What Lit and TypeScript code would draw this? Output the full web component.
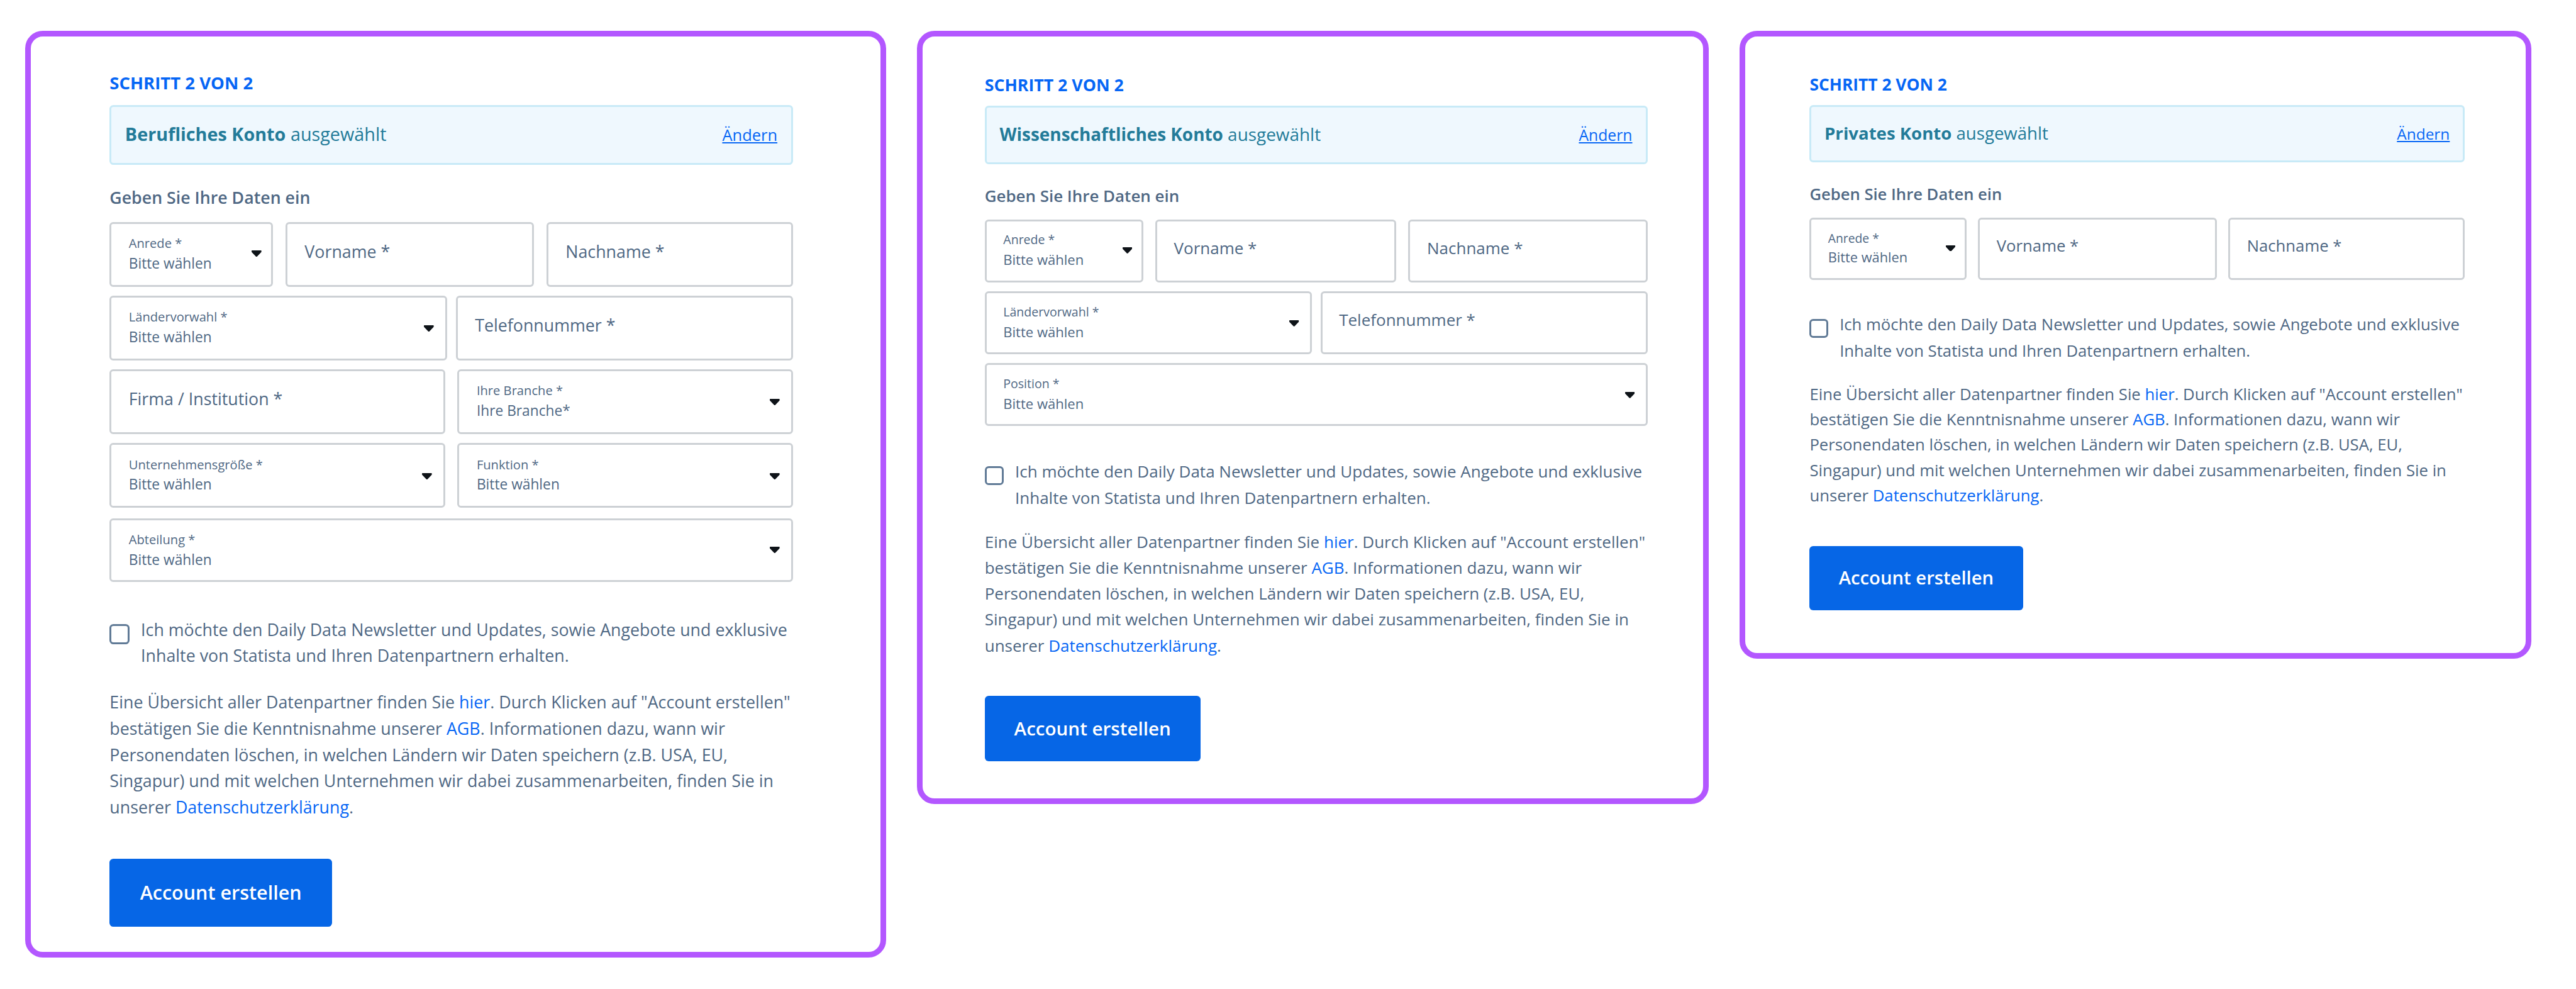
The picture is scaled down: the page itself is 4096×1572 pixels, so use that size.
import { LitElement, html, css, nothing } from 'lit';
import { customElement, property } from 'lit/decorators.js';

interface Field {
  label: string;
  value?: string;
  kind: 'select' | 'input';
}

interface Row {
  layout: string;
  fields: Field[];
}

interface Account {
  id: string;
  name: string;
  rows: Row[];
}

const select = (label: string, value = 'Bitte wählen'): Field => ({ label, value, kind: 'select' });
const input = (label: string): Field => ({ label, kind: 'input' });

const nameRow: Row = { layout: 'name', fields: [select('Anrede *'), input('Vorname *'), input('Nachname *')] };
const phoneRow: Row = { layout: 'phone', fields: [select('Ländervorwahl *'), input('Telefonnummer *')] };

const accounts: Account[] = [
  {
    id: 'business',
    name: 'Berufliches Konto',
    rows: [
      nameRow,
      phoneRow,
      { layout: 'half', fields: [input('Firma / Institution *'), select('Ihre Branche *', 'Ihre Branche*')] },
      { layout: 'half', fields: [select('Unternehmensgröße *'), select('Funktion *')] },
      { layout: 'full', fields: [select('Abteilung *')] },
    ],
  },
  {
    id: 'academic',
    name: 'Wissenschaftliches Konto',
    rows: [nameRow, phoneRow, { layout: 'full', fields: [select('Position *')] }],
  },
  { id: 'private', name: 'Privates Konto', rows: [nameRow] },
];

@customElement('form-field')
export class FormField extends LitElement {
  @property({ attribute: false }) field!: Field;

  static styles = css`
    :host {
      display: block;
      min-width: 0;
    }

    .field {
      box-sizing: border-box;
      display: flex;
      justify-content: space-between;
      height: 100%;
      border: 3px solid #cdd1d5;
      border-radius: calc(7.5 * var(--u));
      background: #fff;
      color: #4f6884;
      white-space: nowrap;
      padding-left: calc(35 * var(--u));
    }

    .placeholder {
      font-size: calc(34.2 * var(--u));
      line-height: calc(46 * var(--u));
      padding-top: calc(33 * var(--u));
    }

    .label {
      font-size: calc(25.7 * var(--u));
      line-height: calc(36 * var(--u));
      padding-top: calc(20.5 * var(--u));
    }

    .value {
      font-size: calc(29 * var(--u));
      line-height: calc(40 * var(--u));
      padding-top: calc(3.4 * var(--u));
    }

    .arrow {
      display: block;
      width: calc(20 * var(--u));
      height: calc(13 * var(--u));
      margin-top: calc(var(--arrow-top) * var(--u));
      margin-right: calc(var(--arrow-right, 22.8) * var(--u));
      fill: #0e1318;
    }
  `;

  render() {
    const { label, value, kind } = this.field;
    return html`
      <div class="field">
        ${kind === 'input'
          ? html`<div class="placeholder">${label}</div>`
          : html`
            <div>
              <div class="label">${label}</div>
              <div class="value">${value}</div>
            </div>
          `}
        ${kind === 'select'
          ? html`<svg class="arrow" viewBox="0 0 20 13"><path d="M1 0H19Q20 0 20 1V2.5Q20 3.2 19.4 3.8L11.5 12.2Q10 13.6 8.5 12.2L.6 3.8Q0 3.2 0 2.5V1Q0 0 1 0Z"/></svg>`
          : nothing}
      </div>
    `;
  }
}

@customElement('account-form')
export class AccountForm extends LitElement {
  @property({ attribute: false }) account!: Account;

  static styles = css`
    :host {
      display: block;
      color: #4f6884;
    }

    .step {
      color: #0666f5;
      font-size: calc(35.1 * var(--u));
      font-weight: 700;
      line-height: calc(46 * var(--u));
      margin-bottom: var(--step-gap);
    }

    .notice {
      box-sizing: border-box;
      height: calc(121.5 * var(--u));
      border: 3px solid #c8eaf7;
      border-radius: calc(8 * var(--u));
      background: #eff8fe;
      color: #237b99;
      display: flex;
      justify-content: space-between;
      align-items: baseline;
      padding: calc(30.2 * var(--u)) calc(28 * var(--u)) 0 calc(27.5 * var(--u));
      font-size: calc(36.7 * var(--u));
      line-height: calc(50 * var(--u));
    }

    .change {
      font-size: calc(32.5 * var(--u));
      color: #0666f5;
      text-decoration: underline;
      text-decoration-thickness: 2px;
      text-underline-offset: calc(3 * var(--u));
    }

    .title {
      font-size: calc(34.1 * var(--u));
      font-weight: 600;
      line-height: calc(46 * var(--u));
      margin-top: var(--title-gap);
      margin-bottom: calc(26.4 * var(--u));
    }

    .row {
      display: grid;
      height: calc(131 * var(--u));
      margin-bottom: calc(var(--row-gap) * var(--u));
    }

    .row.name {
      grid-template-columns: 331.5fr 504fr 500fr;
      column-gap: calc(25 * var(--u));
      --arrow-top: 53.8;
      --arrow-right: 19.4;
    }

    .row.phone {
      grid-template-columns: 1fr 1fr;
      column-gap: calc(18 * var(--u));
      --arrow-top: 56.5;
    }

    .row.half {
      grid-template-columns: 1fr 1fr;
      column-gap: calc(25 * var(--u));
      --arrow-top: 56.4;
    }

    .row.full {
      height: calc(var(--full-height) * var(--u));
      margin-top: calc(var(--full-gap) * var(--u));
      --arrow-top: var(--full-arrow);
    }

    .consent {
      display: flex;
      margin-top: var(--consent-gap);
      font-size: calc(34.2 * var(--u));
      line-height: var(--consent-line);
      white-space: nowrap;
    }

    .checkbox {
      box-sizing: border-box;
      flex: none;
      width: calc(40 * var(--u));
      height: calc(40 * var(--u));
      margin-top: calc(15.5 * var(--u));
      margin-right: calc(23.5 * var(--u));
      border: 3px solid #607a96;
      border-radius: calc(8 * var(--u));
    }

    .legal {
      margin: var(--legal-gap) 0 0;
      font-size: calc(34.2 * var(--u));
      line-height: var(--legal-line);
      white-space: nowrap;
    }

    .link {
      color: #0666f5;
      text-decoration: none;
    }

    .submit {
      box-sizing: border-box;
      display: block;
      width: calc(451 * var(--u));
      height: calc(var(--submit-height) * var(--u));
      margin-top: var(--submit-gap);
      padding: 0 0 calc(2 * var(--u));
      border: none;
      border-radius: calc(8 * var(--u));
      background: #0666e6;
      color: #fff;
      font-family: inherit;
      font-size: calc(38.9 * var(--u));
      font-weight: 600;
      text-align: center;
    }
  `;

  render() {
    return html`
      <div class="step">SCHRITT 2 VON 2</div>
      <div class="notice">
        <span><strong>${this.account.name}</strong> ausgewählt</span>
        <a class="change">Ändern</a>
      </div>
      <div class="title">Geben Sie Ihre Daten ein</div>
      ${this.account.rows.map(row => html`
        <div class="row ${row.layout}">
          ${row.fields.map(field => html`<form-field .field=${field}></form-field>`)}
        </div>
      `)}
      <div class="consent">
        <span class="checkbox"></span>
        <span>
          Ich möchte den Daily Data Newsletter und Updates, sowie Angebote und exklusive<br>
          Inhalte von Statista und Ihren Datenpartnern erhalten.
        </span>
      </div>
      <p class="legal">
        Eine Übersicht aller Datenpartner finden Sie <a class="link">hier</a>. Durch Klicken auf "Account erstellen"<br>
        bestätigen Sie die Kenntnisnahme unserer <a class="link">AGB</a>. Informationen dazu, wann wir<br>
        Personendaten löschen, in welchen Ländern wir Daten speichern (z.B. USA, EU,<br>
        Singapur) und mit welchen Unternehmen wir dabei zusammenarbeiten, finden Sie in<br>
        unserer <a class="link">Datenschutzerklärung</a>.
      </p>
      <button class="submit">Account erstellen</button>
    `;
  }
}

@customElement('app-root')
export class AppRoot extends LitElement {
  static styles = css`
    :host {
      display: flex;
      align-items: flex-start;
      gap: 49.2px;
      box-sizing: border-box;
      width: 4096px;
      height: 1572px;
      padding: 49.4px 0 0 40px;
      background: #fff;
      font-family: 'Open Sans', 'Noto Sans', sans-serif;
    }

    .panel {
      box-sizing: border-box;
      flex: none;
      border: 9px solid #b357ff;
      border-radius: 28px;
    }

    .business {
      --u: 0.7842px;
      --step-gap: 16px;
      --title-gap: 34.2px;
      --row-gap: 18.5;
      --full-gap: 21.2;
      --full-height: 128.5;
      --full-arrow: 53.4;
      --consent-gap: 55.5px;
      --consent-line: 41px;
      --legal-gap: 33.1px;
      --legal-line: 41.78px;
      --submit-gap: 60.9px;
      --submit-height: 137.5;
      width: 1369px;
      height: 1473px;
      padding: 56.1px 139px 0 125.3px;
    }

    .academic {
      --u: 0.7607px;
      --step-gap: 16px;
      --title-gap: 33px;
      --row-gap: 19;
      --full-gap: 19;
      --full-height: 131;
      --full-arrow: 56;
      --consent-gap: 52.5px;
      --consent-line: 41.5px;
      --legal-gap: 28.5px;
      --legal-line: 41.2px;
      --submit-gap: 59px;
      --submit-height: 137.5;
      width: 1259px;
      height: 1229px;
      padding: 59px 88.4px 0 98.5px;
    }

    .private {
      --u: 0.752px;
      --step-gap: 15.4px;
      --title-gap: 33.4px;
      --row-gap: 19;
      --consent-gap: 50.4px;
      --consent-line: 42px;
      --legal-gap: 28px;
      --legal-line: 40.15px;
      --submit-gap: 60.3px;
      --submit-height: 135;
      width: 1259px;
      height: 998px;
      padding: 58.6px 97px 0 102px;
    }
  `;

  render() {
    return accounts.map(account => html`
      <section class="panel ${account.id}">
        <account-form .account=${account}></account-form>
      </section>
    `);
  }
}
